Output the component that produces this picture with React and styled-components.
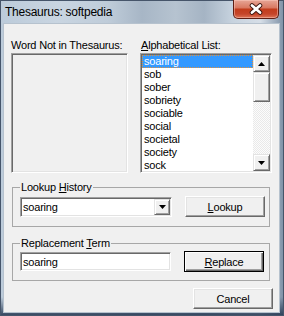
import React from "react";
import styled, { createGlobalStyle } from "styled-components";

const words = ["soaring", "sob", "sober", "sobriety", "sociable", "social", "societal", "society", "sock"];

const GlobalStyle = createGlobalStyle`
  html, body {
    margin: 0;
    padding: 0;
    background: #fff;
  }
  body {
    font-family: "Liberation Sans", Arial, sans-serif;
  }
`;

const Window = styled.div`
  width: 284px;
  height: 316px;
  box-sizing: border-box;
  display: flex;
  flex-direction: column;
  border: 1px solid #46556a;
  background:
    linear-gradient(to bottom, rgba(40, 58, 84, 0) 296px, rgba(40, 58, 84, 0.9) 314px),
    linear-gradient(90deg, #bccbda 0%, #c9d5e1 20%, #bfccd9 38%, #a7b6c6 50%, #b6c3d0 62%, #a5b4c4 72%, #c6d2de 82%, #d6dee7 92%, #8193a8 100%);
`;

const TitleBar = styled.div`
  height: 22px;
  display: flex;
  align-items: flex-start;
  justify-content: space-between;
  padding-left: 4px;
`;

const Title = styled.span`
  font-family: "Liberation Sans", Arial, sans-serif;
  font-size: 12px;
  line-height: 22px;
  letter-spacing: -0.25px;
  color: #000;
`;

const CloseButton = styled.div`
  width: 46px;
  height: 19px;
  margin-top: -1px;
  margin-right: 4px;
  box-sizing: border-box;
  border: 1px solid #5e1e14;
  border-top: none;
  border-radius: 0 0 5px 5px;
  background: linear-gradient(to bottom, #e7a696 0%, #d97a63 42%, #c23c1c 52%, #c5452a 78%, #dc7456 100%);
  box-shadow: inset 0 0 0 1px rgba(255, 210, 200, 0.45);
  display: flex;
  align-items: center;
  justify-content: center;
`;

const Client = styled.div`
  flex: 1;
  margin: 0 3px 2px 2px;
  border: 1px solid #b6c2ce;
  background: #f0f0f0;
  display: flex;
  flex-direction: column;
  letter-spacing: -0.2px;
`;

const TopSection = styled.div`
  display: flex;
  gap: 12px;
  padding: 15px 0 0 7px;
`;

const Column = styled.div`
  display: flex;
  flex-direction: column;
  gap: 1px;
  width: ${(p) => p.$width}px;
`;

const Label = styled.div`
  font-size: 11px;
  line-height: 13px;
  height: 13px;
  color: #000;
  white-space: nowrap;
  padding-left: ${(p) => (p.$indent ? 1 : 0)}px;
`;

const Sunken = styled.div`
  box-sizing: border-box;
  border: 1px solid;
  border-color: #a0a0a0 #fff #fff #a0a0a0;
  box-shadow: inset 1px 1px 0 #696969, inset -1px -1px 0 #e3e3e3;
  padding: 1px;
`;

const ListFrame = styled(Sunken)`
  height: 120px;
  background: ${(p) => (p.$disabled ? "#f0f0f0" : "#fff")};
  display: flex;
  overflow: hidden;
`;

const Items = styled.div`
  flex: 1;
  overflow: hidden;
`;

const Item = styled.div`
  height: 13px;
  box-sizing: border-box;
  font-size: 11px;
  line-height: 11px;
  padding-left: 1px;
  border: 1px dotted ${(p) => (p.$selected ? "#e3913a" : "transparent")};
  background: ${(p) => (p.$selected ? "#3399ff" : "transparent")};
  color: ${(p) => (p.$selected ? "#fff" : "#000")};
  white-space: nowrap;
`;

const ScrollBar = styled.div`
  width: 17px;
  display: flex;
  flex-direction: column;
`;

const Raised = styled.div`
  box-sizing: border-box;
  background: #f0f0f0;
  border: 1px solid;
  border-color: #e3e3e3 #696969 #696969 #e3e3e3;
  box-shadow: inset 1px 1px 0 #fff, inset -1px -1px 0 #a0a0a0;
  display: flex;
  align-items: center;
  justify-content: center;
`;

const ScrollButton = styled(Raised)`
  height: 17px;
`;

const Thumb = styled(Raised)`
  height: 30px;
`;

const Track = styled.div`
  flex: 1;
  background: repeating-conic-gradient(#e9e9e9 0 25%, #fcfcfc 0 50%) 0 0 / 2px 2px;
`;

const Group = styled.fieldset`
  margin: ${(p) => p.$top}px 0 0 8px;
  width: 258px;
  box-sizing: border-box;
  padding: ${(p) => p.$padTop}px 4px ${(p) => p.$padBottom}px 7px;
  border: 1px solid #a7a7a7;
  min-inline-size: 0;
`;

const Legend = styled.legend`
  font-size: 11px;
  line-height: 13px;
  padding: 0 1px;
  color: #000;
`;

const Row = styled.div`
  display: flex;
  align-items: ${(p) => p.$align || "center"};
  gap: ${(p) => p.$gap}px;
  height: 21px;
`;

const Combo = styled(Sunken)`
  width: 152px;
  height: 20px;
  background: #fff;
  display: flex;
  align-items: center;
`;

const FieldText = styled.span`
  flex: 1;
  font-size: 11px;
  line-height: 16px;
  padding-left: 1px;
  color: #000;
`;

const DropButton = styled(Raised)`
  width: 16px;
  height: 16px;
`;

const TextBox = styled(Sunken)`
  width: 151px;
  height: 19px;
  background: #fff;
  display: flex;
  align-items: center;
`;

const Button = styled.div`
  width: 80px;
  height: 21px;
  box-sizing: border-box;
  background: #f0f0f0;
  font-size: 11px;
  color: #000;
  display: flex;
  align-items: center;
  justify-content: center;
  border: 1px solid;
  border-color: ${(p) => (p.$default ? "#000" : "#fff #696969 #696969 #fff")};
  box-shadow: ${(p) =>
    p.$default
      ? "inset 1px 1px 0 #fff, inset -1px -1px 0 #696969, inset -2px -2px 0 #a0a0a0"
      : "inset -1px -1px 0 #a0a0a0, inset 1px 1px 0 #e3e3e3"};
`;

const Footer = styled.div`
  display: flex;
  justify-content: flex-end;
  margin-top: 7px;
  padding-right: 6px;
`;

const Arrow = ({ up }) => (
  <svg width="7" height="4" viewBox="0 0 7 4">
    <polygon points={up ? "3.5,0 7,4 0,4" : "0,0 7,0 3.5,4"} fill="#000" />
  </svg>
);

const CloseIcon = () => (
  <svg width="14" height="12" viewBox="0 0 14 12">
    <path d="M3 2.5 L11 9.5 M11 2.5 L3 9.5" stroke="#3c1610" strokeWidth="4.6" strokeLinecap="round" />
    <path d="M3 2.5 L11 9.5 M11 2.5 L3 9.5" stroke="#fff" strokeWidth="2.8" strokeLinecap="round" />
  </svg>
);

export default function App() {
  return (
    <>
      <GlobalStyle />
      <Window>
        <TitleBar>
          <Title>Thesaurus: softpedia</Title>
          <CloseButton>
            <CloseIcon />
          </CloseButton>
        </TitleBar>
        <Client>
          <TopSection>
            <Column $width={117}>
              <Label>Word Not in Thesaurus:</Label>
              <ListFrame $disabled />
            </Column>
            <Column $width={132}>
              <Label $indent>
                <u>A</u>lphabetical List:
              </Label>
              <ListFrame>
                <Items>
                  {words.map((w, i) => (
                    <Item key={w} $selected={i === 0}>
                      {w}
                    </Item>
                  ))}
                </Items>
                <ScrollBar>
                  <ScrollButton>
                    <Arrow up />
                  </ScrollButton>
                  <Thumb />
                  <Track />
                  <ScrollButton>
                    <Arrow />
                  </ScrollButton>
                </ScrollBar>
              </ListFrame>
            </Column>
          </TopSection>

          <Group $top={8} $padTop={2} $padBottom={9}>
            <Legend>
              Lookup <u>H</u>istory
            </Legend>
            <Row $gap={13} $align="flex-end">
              <Combo>
                <FieldText>soaring</FieldText>
                <DropButton>
                  <Arrow />
                </DropButton>
              </Combo>
              <Button>
                <span>
                  <u>L</u>ookup
                </span>
              </Button>
            </Row>
          </Group>

          <Group $top={10} $padTop={1} $padBottom={8}>
            <Legend>
              Replacement <u>T</u>erm
            </Legend>
            <Row $gap={13}>
              <TextBox>
                <FieldText>soaring</FieldText>
              </TextBox>
              <Button $default>
                <span>
                  <u>R</u>eplace
                </span>
              </Button>
            </Row>
          </Group>

          <Footer>
            <Button>Cancel</Button>
          </Footer>
        </Client>
      </Window>
    </>
  );
}
